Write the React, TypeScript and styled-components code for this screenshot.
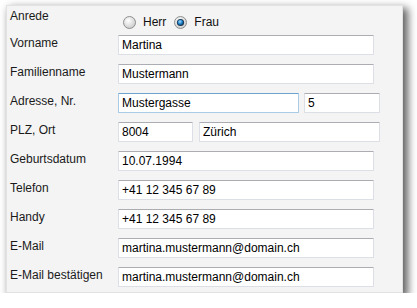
import React from "react";
import styled, { createGlobalStyle } from "styled-components";

const GlobalStyle = createGlobalStyle`
  html, body {
    margin: 0;
    padding: 0;
    background: #fff;
  }
  body {
    font-family: "Liberation Sans", Arial, sans-serif;
    font-size: 12px;
    color: #1a1a1a;
  }
`;

type FieldRow = {
  label: string;
  gap?: number;
  inputs: { value: string; width: number; active?: boolean }[];
};

const rows: FieldRow[] = [
  { label: "Vorname", inputs: [{ value: "Martina", width: 256 }] },
  { label: "Familienname", inputs: [{ value: "Mustermann", width: 256 }] },
  {
    label: "Adresse, Nr.",
    gap: 5,
    inputs: [
      { value: "Mustergasse", width: 181, active: true },
      { value: "5", width: 76 },
    ],
  },
  {
    label: "PLZ, Ort",
    gap: 6,
    inputs: [
      { value: "8004", width: 75 },
      { value: "Zürich", width: 181 },
    ],
  },
  { label: "Geburtsdatum", inputs: [{ value: "10.07.1994", width: 256 }] },
  { label: "Telefon", inputs: [{ value: "+41 12 345 67 89", width: 256 }] },
  { label: "Handy", inputs: [{ value: "+41 12 345 67 89", width: 256 }] },
  {
    label: "E-Mail",
    inputs: [{ value: "martina.mustermann@domain.ch", width: 256 }],
  },
  {
    label: "E-Mail bestätigen",
    inputs: [{ value: "martina.mustermann@domain.ch", width: 256 }],
  },
];

const Radio: React.FC<{ checked?: boolean }> = ({ checked }) => (
  <svg width="13" height="13" viewBox="0 0 13 13">
    <defs>
      <radialGradient id="rbg" cx="40%" cy="35%" r="70%">
        <stop offset="0%" stopColor="#ffffff" />
        <stop offset="100%" stopColor="#c9c9c9" />
      </radialGradient>
      <radialGradient id="rdot" cx="40%" cy="35%" r="70%">
        <stop offset="0%" stopColor="#9fdcff" />
        <stop offset="60%" stopColor="#1a7cc2" />
        <stop offset="100%" stopColor="#0b3c66" />
      </radialGradient>
    </defs>
    <circle cx="6.5" cy="6.5" r="6" fill="url(#rbg)" stroke="#8e8f8f" />
    {checked && (
      <>
        <circle cx="6.5" cy="6.5" r="3.6" fill="#1b3550" />
        <circle cx="6.5" cy="6.5" r="2.8" fill="url(#rdot)" />
      </>
    )}
  </svg>
);

export default function App() {
  return (
    <>
      <GlobalStyle />
      <Panel>
        <Row $first>
          <Label>Anrede</Label>
          <RadioGroup>
            <RadioOption>
              <Radio />
              <span>Herr</span>
            </RadioOption>
            <RadioOption>
              <Radio checked />
              <span>Frau</span>
            </RadioOption>
          </RadioGroup>
        </Row>
        {rows.map((row) => (
          <Row key={row.label}>
            <Label>{row.label}</Label>
            <Fields $gap={row.gap ?? 5}>
              {row.inputs.map((input, i) => (
                <TextInput
                  key={i}
                  $w={input.width}
                  $active={input.active}
                  defaultValue={input.value}
                />
              ))}
            </Fields>
          </Row>
        ))}
      </Panel>
    </>
  );
}

const Panel = styled.div`
  margin: 5px 0 0 6px;
  padding: 2px 0 5px 3px;
  box-sizing: border-box;
  width: 397px;
  background: #f4f4f4;
  border: 1px solid #e2e2e2;
  box-shadow: 4px 4px 8px 1px rgba(0, 0, 0, 0.62);
`;

const Row = styled.div<{ $first?: boolean }>`
  display: flex;
  align-items: flex-start;
  height: ${(p) => (p.$first ? 18 : 20)}px;
  margin-bottom: 9px;
  &:last-child {
    margin-bottom: 0;
  }
`;

const Label = styled.div`
  width: 108px;
  padding-top: 1px;
  line-height: 14px;
  color: #1a1a1a;
  white-space: nowrap;
`;

const RadioGroup = styled.div`
  display: flex;
  align-items: center;
  margin-top: 7px;
  margin-left: 5px;
  gap: 8px;
`;

const RadioOption = styled.label`
  display: flex;
  align-items: center;
  gap: 7px;
  line-height: 14px;
  color: #111;
  svg {
    display: block;
  }
`;

const Fields = styled.div<{ $gap: number }>`
  display: flex;
  gap: ${(p) => p.$gap}px;
`;

const TextInput = styled.input.attrs({ type: "text" })<{
  $w: number;
  $active?: boolean;
}>`
  box-sizing: border-box;
  width: ${(p) => p.$w}px;
  height: 20px;
  margin: 0;
  padding: 0 3px;
  font-family: "Liberation Sans", Arial, sans-serif;
  font-size: 12px;
  color: #000;
  background: #fff;
  border: 1px solid ${(p) => (p.$active ? "#a9cbe6" : "#dcdfe5")};
  border-top-color: ${(p) => (p.$active ? "#6fa3cf" : "#abadb3")};
  border-radius: 1px;
  outline: none;
`;
